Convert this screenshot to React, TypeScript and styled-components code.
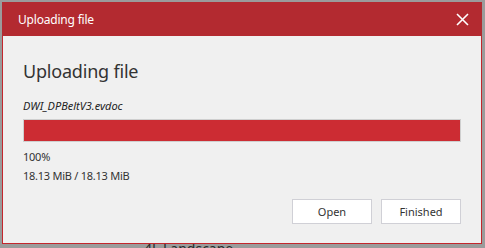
import React from "react";
import styled, { createGlobalStyle } from "styled-components";

const Global = createGlobalStyle`
  html, body { margin: 0; padding: 0; }
  body {
    background: #9b9b9b;
    font-family: "Noto Sans", "Open Sans", sans-serif;
    width: 485px;
    height: 248px;
    overflow: hidden;
  }
`;

const Backdrop = styled.div`
  position: relative;
  width: 485px;
  height: 248px;
  box-sizing: border-box;
  padding: 241px 0 0 144px;
  overflow: hidden;
`;

const BackText = styled.div`
  font-size: 14px;
  color: #2a2a2a;
  line-height: 16px;
`;

const Dialog = styled.div`
  position: absolute;
  top: 2px;
  left: 2px;
  width: 480px;
  height: 242px;
  box-sizing: border-box;
  border: 1px solid #c4262d;
  background: #f0f0f0;
  display: flex;
  flex-direction: column;
`;

const Header = styled.div`
  height: 33px;
  margin: -1px -1px 0 -1px;
  padding: 1px 13px 0 16px;
  background: #b32a30;
  display: flex;
  align-items: center;
  justify-content: space-between;
  color: #fff;
`;

const HeaderTitle = styled.div`
  font-size: 12px;
  letter-spacing: -0.2px;
`;

const CloseButton = styled.button`
  border: none;
  background: none;
  padding: 0;
  width: 14px;
  height: 14px;
  display: flex;
  align-items: center;
  justify-content: center;
  cursor: pointer;
`;

const Body = styled.div`
  flex: 1;
  padding: 22px 20px 0 20px;
  display: flex;
  flex-direction: column;
`;

const Heading = styled.div`
  font-size: 18px;
  letter-spacing: -0.2px;
  color: #333;
  line-height: 26px;
`;

const FileName = styled.div`
  margin-top: 14px;
  font-size: 11px;
  font-style: italic;
  color: #222;
  line-height: 15px;
`;

const ProgressTrack = styled.div`
  margin-top: 6px;
  height: 23px;
  box-sizing: border-box;
  border: 1px solid #cfcfcf;
  background: #e6e6e6;
  display: flex;
`;

const ProgressFill = styled.div`
  background: #cc2c33;
  height: 100%;
`;

const Info = styled.div<{ $gap?: number }>`
  margin-top: ${(p) => p.$gap ?? 0}px;
  font-size: 11px;
  letter-spacing: -0.25px;
  color: #333;
  line-height: 15px;
`;

const Footer = styled.div`
  margin-top: 16px;
  display: flex;
  justify-content: flex-end;
  gap: 9px;
`;

const Button = styled.button`
  width: 80px;
  height: 25px;
  box-sizing: border-box;
  border: 1px solid #d0d0d6;
  background: #fff;
  font-family: "Noto Sans", "Open Sans", sans-serif;
  font-size: 11px;
  color: #333;
  padding: 0;
  cursor: pointer;
`;

export default function App() {
  const progress = 100;
  return (
    <>
      <Global />
      <Backdrop>
        <BackText>4L Landscape</BackText>
        <Dialog>
          <Header>
            <HeaderTitle>Uploading file</HeaderTitle>
            <CloseButton aria-label="Close">
              <svg width="13" height="13" viewBox="0 0 13 13">
                <path d="M1 1 L12 12 M12 1 L1 12" stroke="#fff" strokeWidth="1.6" fill="none" />
              </svg>
            </CloseButton>
          </Header>
          <Body>
            <Heading>Uploading file</Heading>
            <FileName>DWI_DPBeltV3.evdoc</FileName>
            <ProgressTrack>
              <ProgressFill style={{ width: `${progress}%` }} />
            </ProgressTrack>
            <Info $gap={7}>100%</Info>
            <Info $gap={4}>18.13 MiB / 18.13 MiB</Info>
            <Footer>
              <Button>Open</Button>
              <Button>Finished</Button>
            </Footer>
          </Body>
        </Dialog>
      </Backdrop>
    </>
  );
}
